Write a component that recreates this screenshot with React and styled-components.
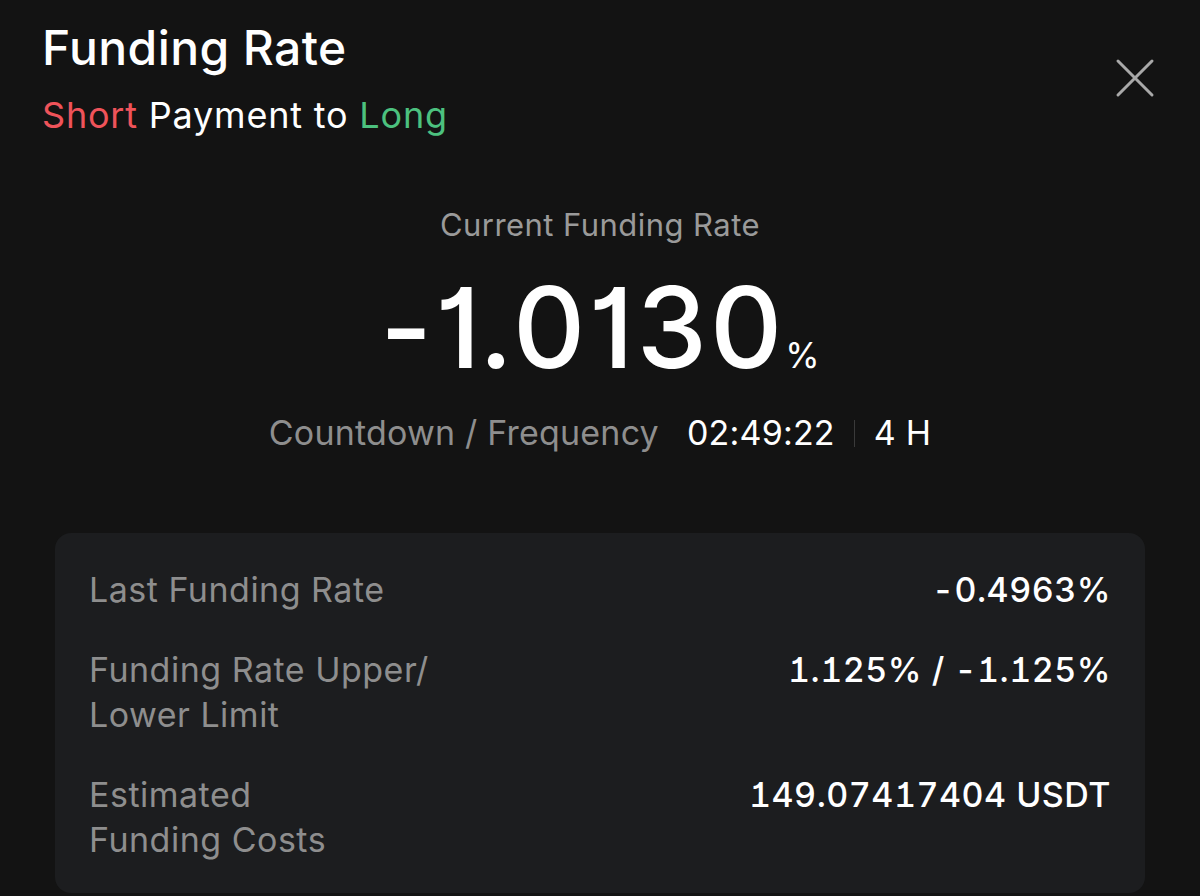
import React from "react";
import styled, { createGlobalStyle } from "styled-components";

const GlobalStyle = createGlobalStyle`
  html, body {
    margin: 0;
    padding: 0;
    background: #131313;
  }
  body {
    font-family: Inter, "Noto Sans", "Liberation Sans", sans-serif;
    color: #ffffff;
  }
`;

const Page = styled.div`
  width: 1200px;
  height: 896px;
  overflow: hidden;
  background: #131313;
  box-sizing: border-box;
  padding: 19px 55px 0 55px;
`;

const Header = styled.div`
  display: flex;
  justify-content: space-between;
  align-items: flex-start;
  margin-left: -13px;
`;

const TitleBlock = styled.div`
  display: flex;
  flex-direction: column;
`;

const Title = styled.h1`
  margin: 0;
  font-size: 48px;
  font-weight: 500;
  line-height: 58px;
  letter-spacing: 0.4px;
  color: #ffffff;
`;

const Subtitle = styled.div`
  font-size: 36px;
  line-height: 44px;
  letter-spacing: 0.8px;
  color: #ffffff;
  margin-top: 16px;
`;

const Side = styled.span`
  color: ${(p) => (p.side === "short" ? "#ef535a" : "#4cc17f")};
`;

const CloseButton = styled.button`
  background: none;
  border: none;
  padding: 0;
  margin: 37px -12px 0 0;
  width: 44px;
  height: 44px;
  display: flex;
  align-items: center;
  justify-content: center;
  cursor: pointer;
`;

const Current = styled.section`
  display: flex;
  flex-direction: column;
  align-items: center;
  margin-top: 69px;
`;

const CurrentLabel = styled.div`
  font-size: 31px;
  line-height: 38px;
  letter-spacing: 0.45px;
  color: #9a9a9a;
`;

const Rate = styled.div`
  display: flex;
  align-items: baseline;
  margin-top: 23px;
  font-feature-settings: "cv01";
`;

const RateValue = styled.span`
  font-size: 112px;
  line-height: 120px;
  font-weight: 500;
  letter-spacing: 3px;
  color: #ffffff;
`;

const RateUnit = styled.span`
  font-size: 35px;
  margin-left: 0;
  color: #ffffff;
`;

const Countdown = styled.div`
  display: flex;
  align-items: center;
  margin-top: 26px;
  font-size: 34px;
  line-height: 40px;
  letter-spacing: 0.2px;
`;

const CountdownLabel = styled.span`
  color: #8e8e8e;
  margin-right: 28px;
`;

const CountdownValue = styled.span`
  color: #ffffff;
`;

const Divider = styled.span`
  width: 1px;
  height: 27px;
  background: #3a3a3a;
  margin: 0 19px;
`;

const Card = styled.div`
  margin-top: 80px;
  background: #1c1d1f;
  border-radius: 16px;
  padding: 34px 34px 31px 34px;
  display: flex;
  flex-direction: column;
  gap: 35px;
`;

const Row = styled.div`
  display: flex;
  justify-content: space-between;
  align-items: flex-start;
  font-size: 34px;
  line-height: 45px;
  letter-spacing: 0.5px;
`;

const Label = styled.div`
  display: flex;
  flex-direction: column;
  color: #8e8e8e;
`;

const Value = styled.div`
  color: #ffffff;
  font-weight: 500;
  text-align: right;
  font-feature-settings: "cv01", "tnum";
`;

const CloseIcon = () => (
  <svg width="40" height="40" viewBox="0 0 40 40" fill="none">
    <path
      d="M3 3 L37 37 M37 3 L3 37"
      stroke="#a9a9a9"
      strokeWidth="3"
      strokeLinecap="round"
    />
  </svg>
);

const rows = [
  { label: ["Last Funding Rate"], value: "-0.4963%" },
  { label: ["Funding Rate Upper/", "Lower Limit"], value: "1.125% / -1.125%" },
  { label: ["Estimated", "Funding Costs"], value: "149.07417404 USDT" },
];

const App = () => {
  return (
    <>
      <GlobalStyle />
      <Page>
        <Header>
          <TitleBlock>
            <Title>Funding Rate</Title>
            <Subtitle>
              <Side side="short">Short</Side> Payment to{" "}
              <Side side="long">Long</Side>
            </Subtitle>
          </TitleBlock>
          <CloseButton aria-label="Close">
            <CloseIcon />
          </CloseButton>
        </Header>

        <Current>
          <CurrentLabel>Current Funding Rate</CurrentLabel>
          <Rate>
            <RateValue>-1.0130</RateValue>
            <RateUnit>%</RateUnit>
          </Rate>
          <Countdown>
            <CountdownLabel>Countdown / Frequency</CountdownLabel>
            <CountdownValue>02:49:22</CountdownValue>
            <Divider />
            <CountdownValue>4 H</CountdownValue>
          </Countdown>
        </Current>

        <Card>
          {rows.map((row) => (
            <Row key={row.value}>
              <Label>
                {row.label.map((line) => (
                  <span key={line}>{line}</span>
                ))}
              </Label>
              <Value>{row.value}</Value>
            </Row>
          ))}
        </Card>
      </Page>
    </>
  );
};

export default App;
